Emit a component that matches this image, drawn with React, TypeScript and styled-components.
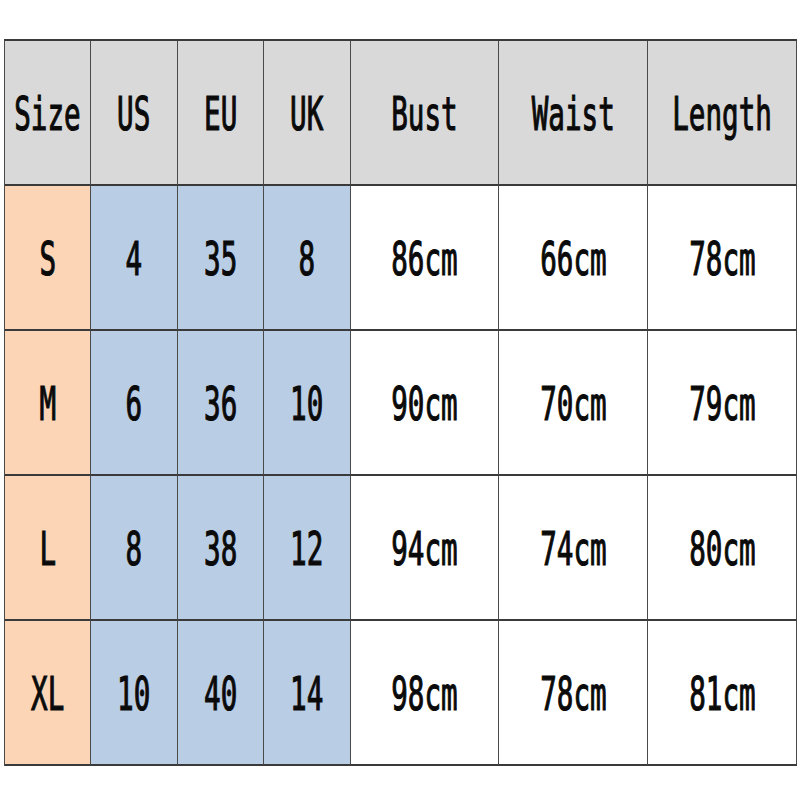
import React from "react";
import styled, { createGlobalStyle } from "styled-components";

const Global = createGlobalStyle`
  html, body { margin: 0; padding: 0; background: #ffffff; }
  body { width: 800px; height: 800px; overflow: hidden; }
`;

const Page = styled.div`
  width: 800px;
  height: 800px;
  background: #ffffff;
  padding: 39px 0 0 4px;
  box-sizing: border-box;
`;

const Grid = styled.div`
  display: grid;
  grid-template-columns: 86px 87px 86px 87px 148px 149px 149px;
  grid-auto-rows: 145px;
  width: max-content;
  border-top: 2px solid #3a3a3a;
  border-left: 1px solid #4a4a4a;
`;

const Cell = styled.div<{ $bg: string }>`
  box-sizing: border-box;
  background: ${(p) => p.$bg};
  border-right: 1px solid #4a4a4a;
  border-bottom: 2px solid #3a3a3a;
  display: flex;
  align-items: center;
  justify-content: center;
  padding-top: 3px;
`;

const Label = styled.span`
  display: inline-block;
  font-family: "DejaVu Sans Mono", "Liberation Mono", monospace;
  font-weight: normal;
  font-size: 46px;
  line-height: 1;
  color: #0a0a0a;
  -webkit-text-stroke: 1.2px #0a0a0a;
  transform: scaleX(0.6);
  transform-origin: center;
  white-space: nowrap;
`;

const GRAY = "#d9d9d9";
const ORANGE = "#fbd5b5";
const BLUE = "#b9cde5";
const WHITE = "#ffffff";

const header = ["Size", "US", "EU", "UK", "Bust", "Waist", "Length"];
const rows = [
  ["S", "4", "35", "8", "86cm", "66cm", "78cm"],
  ["M", "6", "36", "10", "90cm", "70cm", "79cm"],
  ["L", "8", "38", "12", "94cm", "74cm", "80cm"],
  ["XL", "10", "40", "14", "98cm", "78cm", "81cm"],
];

const bodyColor = (i: number) => (i === 0 ? ORANGE : i <= 3 ? BLUE : WHITE);

export default function App() {
  return (
    <>
      <Global />
      <Page>
        <Grid>
          {header.map((h) => (
            <Cell key={h} $bg={GRAY}>
              <Label>{h}</Label>
            </Cell>
          ))}
          {rows.map((r, ri) =>
            r.map((v, ci) => (
              <Cell key={`${ri}-${ci}`} $bg={bodyColor(ci)}>
                <Label>{v}</Label>
              </Cell>
            ))
          )}
        </Grid>
      </Page>
    </>
  );
}
